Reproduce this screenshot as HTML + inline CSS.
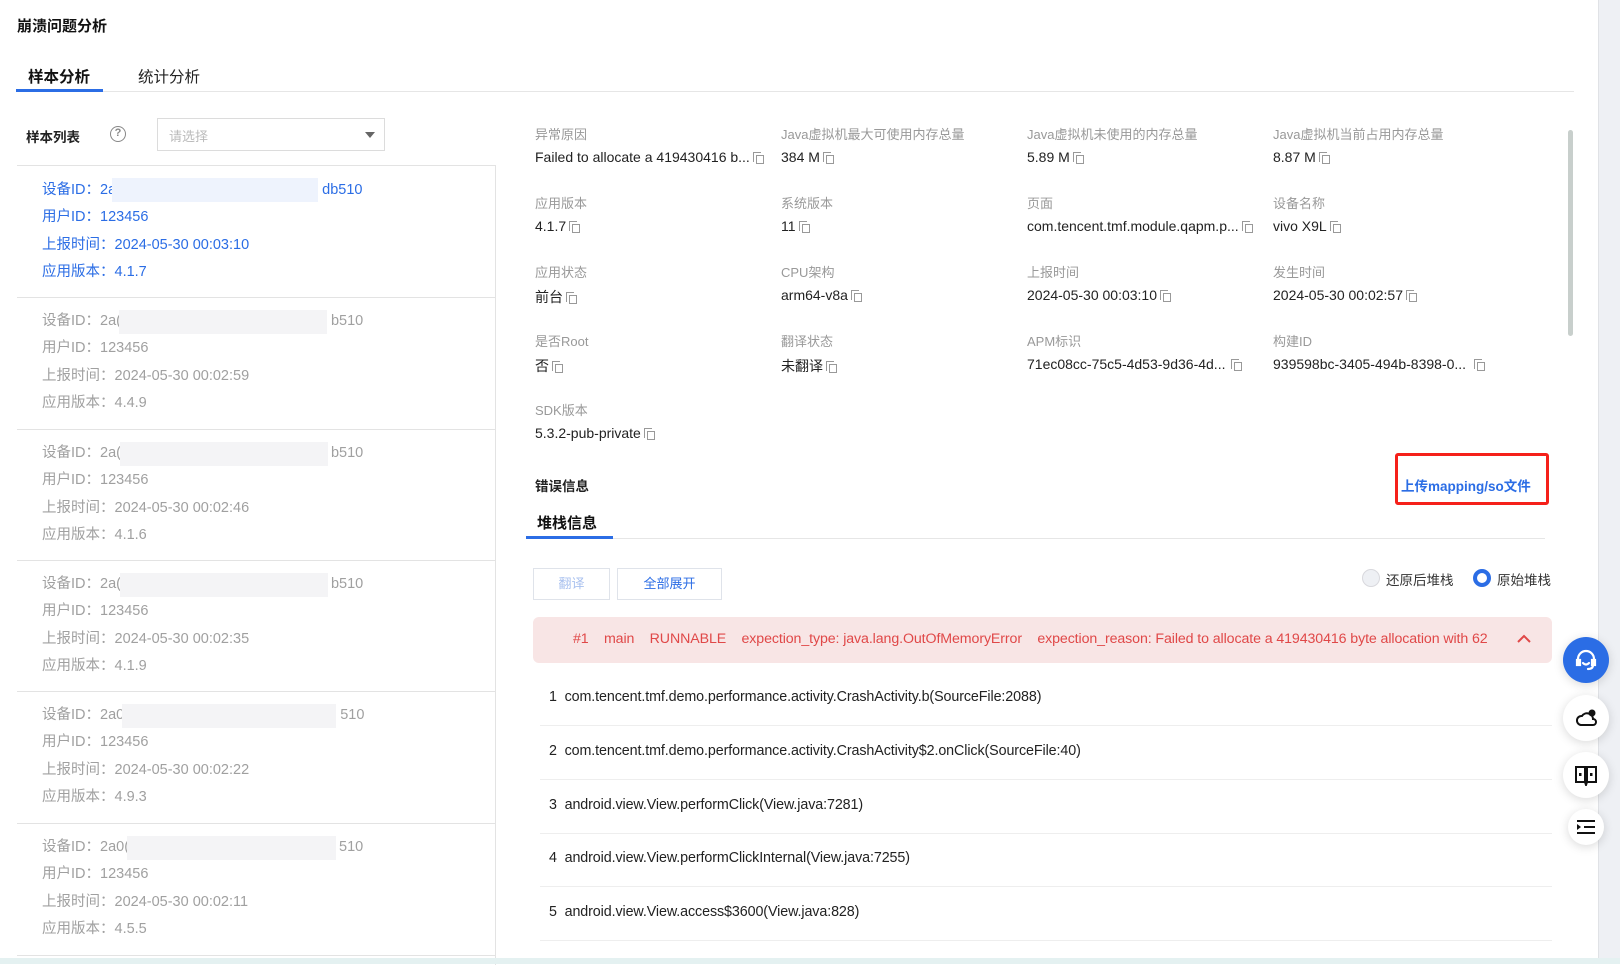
<!DOCTYPE html>
<html><head><meta charset="utf-8">
<style>
*{margin:0;padding:0;box-sizing:border-box}
body{width:1620px;height:964px;overflow:hidden;background:#fff;font-family:"Liberation Sans","Noto Sans CJK SC",sans-serif;position:relative;color:#333}
.a{position:absolute;white-space:nowrap}
.lbl{font-size:13px;color:#999}
.val{font-size:14px;color:#222}
.cp{display:inline-block;width:11px;height:12px;position:relative;vertical-align:-2px;margin-left:3px}
.cp:before{content:"";position:absolute;left:0;top:0;width:7px;height:9px;border-left:1.5px solid #999;border-top:1.5px solid #999}
.cp:after{content:"";position:absolute;left:3px;top:3px;width:8px;height:9px;border:1.5px solid #999;box-sizing:border-box}
.it{font-size:14.5px;line-height:27.3px;color:#a0a0a0}
.it.s{color:#2b6de5}
.blur{position:absolute;height:24px;background:#f4f4f6}
.sep{position:absolute;left:17px;width:479px;height:1px;background:#e3e3e3}
.row{position:absolute;left:549px;font-size:14.3px;color:#222;letter-spacing:-0.1px}
.rs{position:absolute;left:540px;width:1012px;height:1px;background:#eee}
.fb{position:absolute;border-radius:50%;background:#fff;box-shadow:0 2px 10px rgba(0,0,0,.15);display:flex;align-items:center;justify-content:center}
</style></head><body>
<div class="a" style="left:17px;top:15px;font-size:15px;font-weight:bold;color:#111">崩溃问题分析</div>
<div class="a" style="left:28px;top:65px;font-size:15.5px;font-weight:bold;color:#111">样本分析</div>
<div class="a" style="left:138px;top:65px;font-size:15.5px;color:#222">统计分析</div>
<div class="a" style="left:16px;top:91px;width:1558px;height:1px;background:#e6e6e6"></div>
<div class="a" style="left:16px;top:89px;width:87px;height:3px;background:#2b6de5"></div>

<div class="a" style="left:26px;top:126px;font-size:13.5px;font-weight:bold;color:#222">样本列表</div>
<div class="a" style="left:110px;top:126px;width:16px;height:16px;border:1.5px solid #888;border-radius:50%;font-size:11px;color:#888;text-align:center;line-height:13px;font-weight:bold">?</div>
<div class="a" style="left:157px;top:118px;width:228px;height:33px;border:1px solid #dcdcdc;"></div>
<div class="a" style="left:169px;top:126px;font-size:13px;color:#bbb">请选择</div>
<div class="a" style="left:365px;top:132px;width:0;height:0;border-left:5px solid transparent;border-right:5px solid transparent;border-top:6px solid #666"></div>

<div class="a" style="left:17px;top:165px;width:479px;height:1px;background:#e3e3e3"></div>
<div class="a" style="left:495px;top:165px;width:1px;height:800px;background:#e3e3e3"></div>

<div class="a it s" style="left:42px;top:177px">设备ID：2a<span style="display:inline-block;width:206px"></span>db510<br>用户ID：123456<br>上报时间：2024-05-30 00:03:10<br>应用版本：4.1.7</div>
<div class="blur" style="left:112px;top:178px;width:206px;background:#eef3fd"></div>
<div class="sep" style="top:297px"></div>

<div class="a it" style="left:42px;top:308px">设备ID：2a(<span style="display:inline-block;width:210px"></span>b510<br>用户ID：123456<br>上报时间：2024-05-30 00:02:59<br>应用版本：4.4.9</div>
<div class="blur" style="left:119px;top:310px;width:208px"></div>
<div class="sep" style="top:429px"></div>

<div class="a it" style="left:42px;top:440px">设备ID：2a(<span style="display:inline-block;width:210px"></span>b510<br>用户ID：123456<br>上报时间：2024-05-30 00:02:46<br>应用版本：4.1.6</div>
<div class="blur" style="left:120px;top:442px;width:208px"></div>
<div class="sep" style="top:560px"></div>

<div class="a it" style="left:42px;top:571px">设备ID：2a(<span style="display:inline-block;width:210px"></span>b510<br>用户ID：123456<br>上报时间：2024-05-30 00:02:35<br>应用版本：4.1.9</div>
<div class="blur" style="left:120px;top:573px;width:208px"></div>
<div class="sep" style="top:691px"></div>

<div class="a it" style="left:42px;top:702px">设备ID：2a0<span style="display:inline-block;width:216px"></span>510<br>用户ID：123456<br>上报时间：2024-05-30 00:02:22<br>应用版本：4.9.3</div>
<div class="blur" style="left:122px;top:704px;width:214px"></div>
<div class="sep" style="top:823px"></div>

<div class="a it" style="left:42px;top:834px">设备ID：2a0(<span style="display:inline-block;width:210px"></span>510<br>用户ID：123456<br>上报时间：2024-05-30 00:02:11<br>应用版本：4.5.5</div>
<div class="blur" style="left:127px;top:836px;width:209px"></div>
<div class="sep" style="top:955px"></div>

<!-- details grid -->
<div class="a lbl" style="left:535px;top:124px">异常原因</div>
<div class="a val" style="left:535px;top:149px">Failed to allocate a 419430416 b...<span class="cp"></span></div>
<div class="a lbl" style="left:781px;top:124px">Java虚拟机最大可使用内存总量</div>
<div class="a val" style="left:781px;top:149px">384 M<span class="cp"></span></div>
<div class="a lbl" style="left:1027px;top:124px">Java虚拟机未使用的内存总量</div>
<div class="a val" style="left:1027px;top:149px">5.89 M<span class="cp"></span></div>
<div class="a lbl" style="left:1273px;top:124px">Java虚拟机当前占用内存总量</div>
<div class="a val" style="left:1273px;top:149px">8.87 M<span class="cp"></span></div>

<div class="a lbl" style="left:535px;top:193px">应用版本</div>
<div class="a val" style="left:535px;top:218px">4.1.7<span class="cp"></span></div>
<div class="a lbl" style="left:781px;top:193px">系统版本</div>
<div class="a val" style="left:781px;top:218px">11<span class="cp"></span></div>
<div class="a lbl" style="left:1027px;top:193px">页面</div>
<div class="a val" style="left:1027px;top:218px">com.tencent.tmf.module.qapm.p...<span class="cp"></span></div>
<div class="a lbl" style="left:1273px;top:193px">设备名称</div>
<div class="a val" style="left:1273px;top:218px">vivo X9L<span class="cp"></span></div>

<div class="a lbl" style="left:535px;top:262px">应用状态</div>
<div class="a val" style="left:535px;top:287px">前台<span class="cp"></span></div>
<div class="a lbl" style="left:781px;top:262px">CPU架构</div>
<div class="a val" style="left:781px;top:287px">arm64-v8a<span class="cp"></span></div>
<div class="a lbl" style="left:1027px;top:262px">上报时间</div>
<div class="a val" style="left:1027px;top:287px">2024-05-30 00:03:10<span class="cp"></span></div>
<div class="a lbl" style="left:1273px;top:262px">发生时间</div>
<div class="a val" style="left:1273px;top:287px">2024-05-30 00:02:57<span class="cp"></span></div>

<div class="a lbl" style="left:535px;top:331px">是否Root</div>
<div class="a val" style="left:535px;top:356px">否<span class="cp"></span></div>
<div class="a lbl" style="left:781px;top:331px">翻译状态</div>
<div class="a val" style="left:781px;top:356px">未翻译<span class="cp"></span></div>
<div class="a lbl" style="left:1027px;top:331px">APM标识</div>
<div class="a val" style="left:1027px;top:356px">71ec08cc-75c5-4d53-9d36-4d...<span class="cp" style="margin-left:6px"></span></div>
<div class="a lbl" style="left:1273px;top:331px">构建ID</div>
<div class="a val" style="left:1273px;top:356px">939598bc-3405-494b-8398-0...<span class="cp" style="margin-left:8px"></span></div>

<div class="a lbl" style="left:535px;top:400px">SDK版本</div>
<div class="a val" style="left:535px;top:425px">5.3.2-pub-private<span class="cp"></span></div>

<div class="a" style="left:1568px;top:130px;width:5px;height:206px;border-radius:3px;background:#c8cfcc"></div>

<div class="a" style="left:535px;top:475px;font-size:13.5px;font-weight:bold;color:#222">错误信息</div>
<div class="a" style="left:1395px;top:453px;width:154px;height:52px;border:3px solid #f5201a;border-radius:3px"></div>
<div class="a" style="left:1401px;top:475px;font-size:13.5px;font-weight:bold;color:#2b6de5">上传mapping/so文件</div>

<div class="a" style="left:537px;top:512px;font-size:15px;font-weight:bold;color:#111">堆栈信息</div>
<div class="a" style="left:526px;top:538px;width:1019px;height:1px;background:#e6e6e6"></div>
<div class="a" style="left:526px;top:536px;width:87px;height:3px;background:#2b6de5"></div>

<div class="a" style="left:533px;top:568px;width:77px;height:32px;border:1px solid #dfe3ea;font-size:13px;color:#a9c1ef;text-align:center;line-height:30px">翻译</div>
<div class="a" style="left:617px;top:568px;width:105px;height:32px;border:1px solid #dfe3ea;font-size:13px;color:#2b6de5;text-align:center;line-height:30px">全部展开</div>

<div class="a" style="left:1362px;top:569px;width:18px;height:18px;border-radius:50%;border:1px solid #d8d8dd;background:#eef0f4"></div>
<div class="a" style="left:1386px;top:569px;font-size:13.5px;color:#333">还原后堆栈</div>
<div class="a" style="left:1473px;top:569px;width:18px;height:18px;border-radius:50%;border:4px solid #2b6de5;background:#fff"></div>
<div class="a" style="left:1497px;top:569px;font-size:13.5px;color:#333">原始堆栈</div>

<div class="a" style="left:533px;top:617px;width:1019px;height:46px;background:#f8e5e5;border-radius:6px;overflow:hidden">
<div class="a" style="left:40px;top:14px;width:915px;overflow:hidden;font-size:14.2px;color:#e04848;letter-spacing:-0.1px">#1 &nbsp;&nbsp; main &nbsp;&nbsp; RUNNABLE &nbsp;&nbsp; expection_type: java.lang.OutOfMemoryError &nbsp;&nbsp; expection_reason: Failed to allocate a 419430416 byte allocation with 6291456 free bytes</div>
<svg class="a" style="left:983px;top:16px" width="16" height="12" viewBox="0 0 16 12"><path d="M2 9 L8 3 L14 9" fill="none" stroke="#e04848" stroke-width="2"/></svg>
</div>

<div class="row" style="top:689px">1 &nbsp;com.tencent.tmf.demo.performance.activity.CrashActivity.b(SourceFile:2088)</div>
<div class="rs" style="top:725px"></div>
<div class="row" style="top:743px">2 &nbsp;com.tencent.tmf.demo.performance.activity.CrashActivity$2.onClick(SourceFile:40)</div>
<div class="rs" style="top:779px"></div>
<div class="row" style="top:797px">3 &nbsp;android.view.View.performClick(View.java:7281)</div>
<div class="rs" style="top:833px"></div>
<div class="row" style="top:850px">4 &nbsp;android.view.View.performClickInternal(View.java:7255)</div>
<div class="rs" style="top:886px"></div>
<div class="row" style="top:904px">5 &nbsp;android.view.View.access$3600(View.java:828)</div>
<div class="rs" style="top:940px"></div>

<!-- right gray edge -->
<div class="a" style="left:1598px;top:0;width:22px;height:964px;background:#eef0f4;border-left:1px solid #e0e2e6"></div>
<div class="a" style="left:0;top:958px;width:1620px;height:6px;background:#e4f1f1"></div>

<!-- floating buttons -->
<div class="fb" style="left:1563px;top:637px;width:46px;height:46px;background:#2b6de5">
<svg width="24" height="24" viewBox="0 0 24 24" fill="none" stroke="#fff" stroke-width="2.2" stroke-linecap="round"><path d="M4 14 V11 A8 8 0 0 1 20 11 V14"/><rect x="3" y="12" width="3" height="5" fill="#fff"/><rect x="18" y="12" width="3" height="5" fill="#fff"/><path d="M9 15 Q12 18 15 15"/><path d="M19 17 Q19 21 14 21"/></svg></div>
<div class="fb" style="left:1563px;top:695px;width:46px;height:46px">
<svg width="24" height="22" viewBox="0 0 24 22" fill="none" stroke="#111" stroke-width="2"><path d="M7 18 H19 A3 3 0 0 0 19 12 A6 6 0 0 0 8 9 A4.5 4.5 0 0 0 7 18 Z"/><circle cx="18" cy="6" r="3.5" fill="#111" stroke="none"/></svg></div>
<div class="fb" style="left:1563px;top:752px;width:46px;height:46px">
<svg width="24" height="22" viewBox="0 0 24 22" fill="none" stroke="#111" stroke-width="2"><path d="M2 3 H11 V18 H2 Z M13 3 H22 V18 H13 Z"/><path d="M11 18 L12 21 L13 18"/><rect x="5" y="9" width="2.5" height="3" fill="#111" stroke="none"/><rect x="16" y="9" width="2.5" height="3" fill="#111" stroke="none"/></svg></div>
<div class="fb" style="left:1568px;top:809px;width:36px;height:36px">
<svg width="18" height="14" viewBox="0 0 18 14" fill="#111"><rect x="0" y="0" width="18" height="2"/><rect x="7" y="6" width="11" height="2"/><rect x="0" y="12" width="18" height="2"/><path d="M0 4 L4 7 L0 10 Z"/></svg></div>
</body></html>
